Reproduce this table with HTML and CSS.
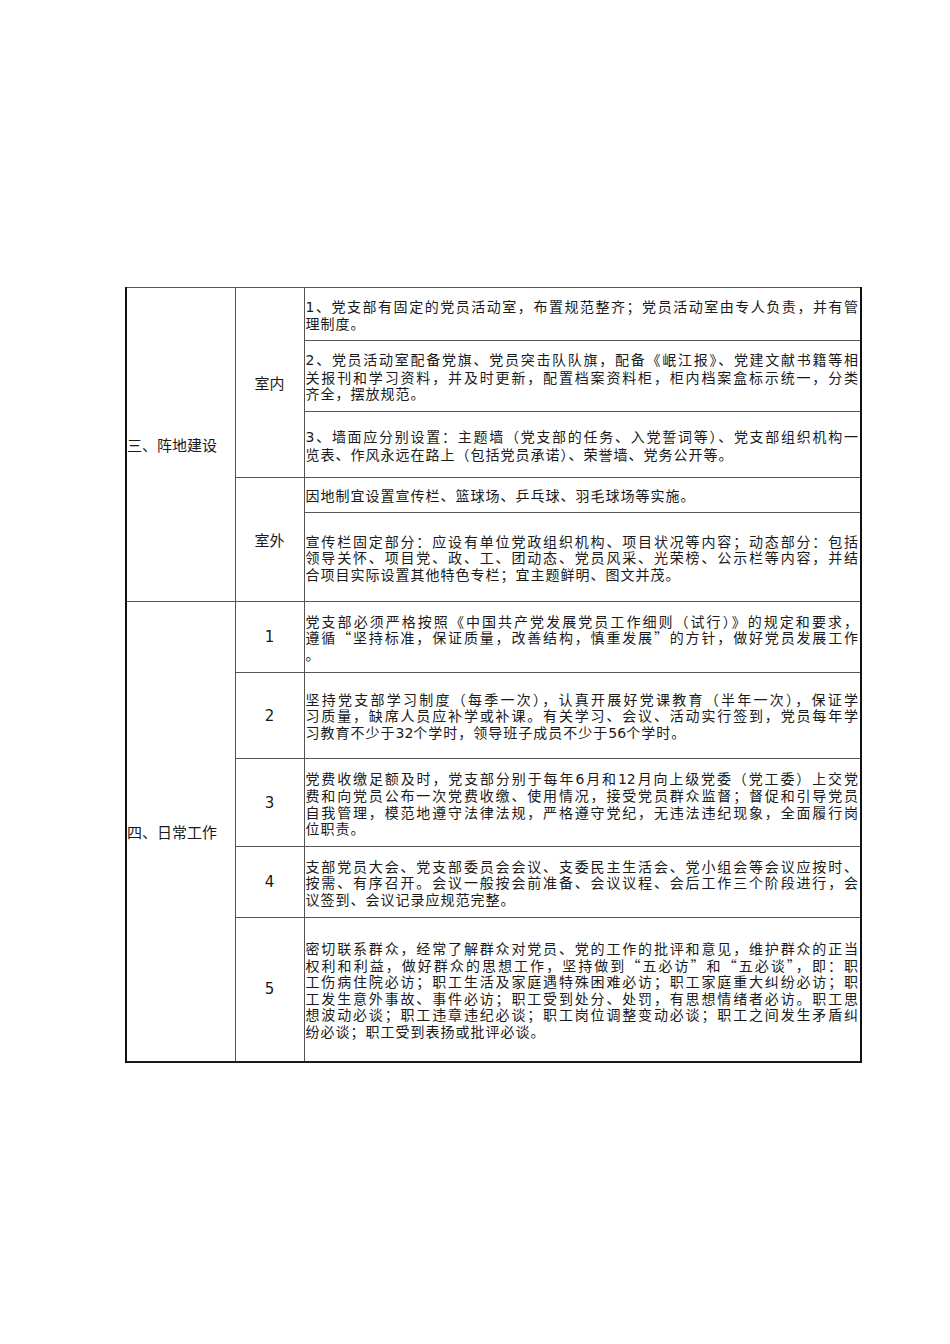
FILE: index.html
```html
<!DOCTYPE html>
<html lang="zh-CN">
<head>
<meta charset="utf-8">
<title>阵地建设与日常工作</title>
<link rel="stylesheet" href="styles.css">
</head>
<body>
<table class="sheet">
  <colgroup>
    <col class="c-sec">
    <col class="c-sub">
    <col class="c-txt">
  </colgroup>
  <tr class="r1">
    <td class="sec" rowspan="5">三、阵地建设</td>
    <td class="sub" rowspan="3">室内</td>
    <td class="txt">
      <span class="ln j"><span class="d">1</span>、党支部有固定的党员活动室，布置规范整齐；党员活动室由专人负责，并有管</span>
      <span class="ln">理制度。</span>
    </td>
  </tr>
  <tr class="r2">
    <td class="txt">
      <span class="ln j"><span class="d">2</span>、党员活动室配备党旗、党员突击队队旗，配备《岷江报》、党建文献书籍等相</span>
      <span class="ln j">关报刊和学习资料，并及时更新，配置档案资料柜，柜内档案盒标示统一，分类</span>
      <span class="ln">齐全，摆放规范。</span>
    </td>
  </tr>
  <tr class="r3">
    <td class="txt">
      <span class="ln j"><span class="d">3</span>、墙面应分别设置：主题墙（党支部的任务、入党誓词等）、党支部组织机构一</span>
      <span class="ln">览表、作风永远在路上（包括党员承诺）、荣誉墙、党务公开等。</span>
    </td>
  </tr>
  <tr class="r4">
    <td class="sub" rowspan="2">室外</td>
    <td class="txt">
      <span class="ln">因地制宜设置宣传栏、篮球场、乒乓球、羽毛球场等实施。</span>
    </td>
  </tr>
  <tr class="r5">
    <td class="txt">
      <span class="ln j">宣传栏固定部分：应设有单位党政组织机构、项目状况等内容；动态部分：包括</span>
      <span class="ln j">领导关怀、项目党、政、工、团动态、党员风采、光荣榜、公示栏等内容，并结</span>
      <span class="ln">合项目实际设置其他特色专栏；宜主题鲜明、图文并茂。</span>
    </td>
  </tr>
  <tr class="r6">
    <td class="sec" rowspan="5">四、日常工作</td>
    <td class="sub num">1</td>
    <td class="txt">
      <span class="ln j">党支部必须严格按照《中国共产党发展党员工作细则（试行）》的规定和要求，</span>
      <span class="ln j">遵循“坚持标准，保证质量，改善结构，慎重发展”的方针，做好党员发展工作</span>
      <span class="ln">。</span>
    </td>
  </tr>
  <tr class="r7">
    <td class="sub num">2</td>
    <td class="txt">
      <span class="ln j">坚持党支部学习制度（每季一次），认真开展好党课教育（半年一次），保证学</span>
      <span class="ln j">习质量，缺席人员应补学或补课。有关学习、会议、活动实行签到，党员每年学</span>
      <span class="ln">习教育不少于<span class="d">32</span>个学时，领导班子成员不少于<span class="d">56</span>个学时。</span>
    </td>
  </tr>
  <tr class="r8">
    <td class="sub num">3</td>
    <td class="txt">
      <span class="ln j">党费收缴足额及时，党支部分别于每年<span class="d">6</span>月和<span class="d">12</span>月向上级党委（党工委）上交党</span>
      <span class="ln j">费和向党员公布一次党费收缴、使用情况，接受党员群众监督；督促和引导党员</span>
      <span class="ln j">自我管理，模范地遵守法律法规，严格遵守党纪，无违法违纪现象，全面履行岗</span>
      <span class="ln">位职责。</span>
    </td>
  </tr>
  <tr class="r9">
    <td class="sub num">4</td>
    <td class="txt">
      <span class="ln j">支部党员大会、党支部委员会会议、支委民主生活会、党小组会等会议应按时、</span>
      <span class="ln j">按需、有序召开。会议一般按会前准备、会议议程、会后工作三个阶段进行，会</span>
      <span class="ln">议签到、会议记录应规范完整。</span>
    </td>
  </tr>
  <tr class="r10">
    <td class="sub num">5</td>
    <td class="txt">
      <span class="ln j">密切联系群众，经常了解群众对党员、党的工作的批评和意见，维护群众的正当</span>
      <span class="ln j">权利和利益，做好群众的思想工作，坚持做到“五必访”和“五必谈”，即：职</span>
      <span class="ln j">工伤病住院必访；职工生活及家庭遇特殊困难必访；职工家庭重大纠纷必访；职</span>
      <span class="ln j">工发生意外事故、事件必访；职工受到处分、处罚，有思想情绪者必访。职工思</span>
      <span class="ln j">想波动必谈；职工违章违纪必谈；职工岗位调整变动必谈；职工之间发生矛盾纠</span>
      <span class="ln">纷必谈；职工受到表扬或批评必谈。</span>
    </td>
  </tr>
</table>
</body>
</html>
```
FILE: styles.css
```css
html, body {
  margin: 0;
  padding: 0;
  background: #ffffff;
}

body {
  width: 950px;
  height: 1344px;
  font-family: "Noto Sans CJK SC", "DejaVu Sans", sans-serif;
  font-size: 15px;
  color: #1a1a1a;
}

.sheet {
  margin: 287px 0 0 125px;
  width: 735px;
  table-layout: fixed;
  border-collapse: collapse;
  border-top: 1px solid #666666;
  border-bottom: 2px solid #1a1a1a;
  border-left: 2px solid #111111;
  border-right: 2px solid #111111;
}

.c-sec { width: 109px; }
.c-sub { width: 69px; }
.c-txt { width: 557px; }

.sheet td {
  border: 1px solid #555555;
  padding: 0;
  vertical-align: middle;
}

.sheet td.sec {
  border-left: 2px solid #111111;
  text-align: left;
  padding-left: 0;
  font-family: "DejaVu Sans", "Noto Sans CJK SC", sans-serif;
}

.sheet td.sub {
  text-align: center;
}

.sheet td.num {
  font-family: "DejaVu Sans", sans-serif;
  font-size: 15px;
}

.sheet td.txt {
  border-right: 2px solid #111111;
  padding: 1px 2px 0 1px;
  font-size: 14px;
  letter-spacing: 1px;
  line-height: 16.5px;
}

.ln {
  display: block;
  text-align: left;
}

.ln.j {
  text-align: justify;
  text-align-last: justify;
  letter-spacing: 0;
}

.d {
  font-family: "DejaVu Sans", sans-serif;
  letter-spacing: 0;
}

.r1 { height: 53px; }
.r2 { height: 71px; }
.r3 { height: 66px; }
.r4 { height: 35px; }
.r5 { height: 89px; }
.r6 { height: 71px; }
.r7 { height: 86px; }
.r8 { height: 88px; }
.r9 { height: 71px; }
.r10 { height: 144px; }
```
